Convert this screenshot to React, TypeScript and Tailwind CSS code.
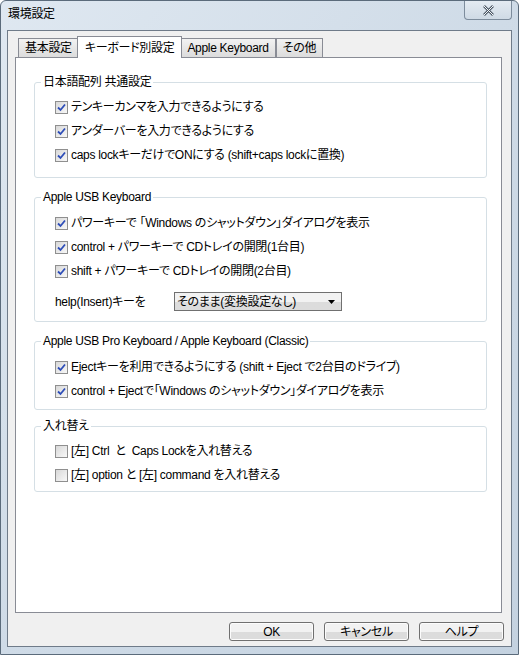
import React from "react";

const FONT = {
  fontFamily: '"Liberation Sans", "Noto Sans CJK JP", sans-serif',
  fontFeatureSettings: '"palt"',
  letterSpacing: "-0.3px",
};

function CheckBox({ checked }: { checked: boolean }) {
  return (
    <span className="flex h-[13px] w-[13px] shrink-0 items-center justify-center border border-[#8f8f8f] bg-white">
      <span className="flex h-[11px] w-[11px] items-center justify-center bg-gradient-to-br from-[#d8d8d8] to-[#f8f8f8]">
        {checked && (
          <svg width="9" height="9" viewBox="0 0 9 9">
            <path d="M1 4.5 L3.5 7 L8 1.5" fill="none" stroke="#2d4db8" strokeWidth="1.8" />
          </svg>
        )}
      </span>
    </span>
  );
}

function Row({ checked, children }: { checked: boolean; children: React.ReactNode }) {
  return (
    <div className="flex h-[24px] items-center gap-[3px] pl-[20px] text-[12px] text-black">
      <CheckBox checked={checked} />
      <span className="whitespace-pre leading-[14px]">{children}</span>
    </div>
  );
}

function Group({
  title,
  className,
  children,
}: {
  title: string;
  className?: string;
  children: React.ReactNode;
}) {
  return (
    <fieldset className={"ml-[18px] mr-[14px] rounded-[3px] border border-[#d5dfe5] " + (className ?? "")}>
      <legend className="ml-[6px] px-[2px] text-[12px] leading-[14px] text-black">{title}</legend>
      {children}
    </fieldset>
  );
}

function Tab({ label, active }: { label: string; active?: boolean }) {
  if (active) {
    return (
      <div className="relative z-10 -mb-px -ml-[2px] -mr-[2px] flex h-[22px] items-center border border-b-0 border-[#898c95] bg-white px-[7px] text-[12px]">
        {label}
      </div>
    );
  }
  return (
    <div className="flex h-[19px] items-center border border-b-0 border-[#898c95] bg-gradient-to-b from-[#f2f2f2] to-[#dcdcdc] px-[6px] text-[12px]">
      {label}
    </div>
  );
}

function Button({ label }: { label: string }) {
  return (
    <button className="flex h-[19px] w-[85px] items-center justify-center rounded-[3px] border border-[#707070] bg-gradient-to-b from-[#f2f2f2] from-50% to-[#dcdcdc] to-50% text-[12px] text-black shadow-[inset_0_0_0_1px_#fcfcfc]">
      {label}
    </button>
  );
}

export default function App() {
  return (
    <div style={FONT} className="h-[655px] w-[519px] bg-white">
      <div className="flex h-[655px] w-[519px] flex-col rounded-t-[6px] border border-[#5b6b7b] bg-gradient-to-br from-[#dfe8f1] via-[#cfdbe7] to-[#c4d2e0]">
        <div className="flex h-[29px] items-start justify-between">
          <span className="pl-[7px] pt-[6px] text-[12px] leading-[14px] text-black">環境設定</span>
          <div className="mr-[6px] flex h-[19px] w-[48px] items-center justify-center rounded-b-[4px] border border-t-0 border-[#7d8c9c] bg-gradient-to-b from-[#e4ebf2] to-[#cfdae5]">
            <svg width="13" height="11" viewBox="0 0 13 11">
              <path d="M2 1 L11 10 M11 1 L2 10" stroke="#4c5866" strokeWidth="2.6" />
              <path d="M2 1 L11 10 M11 1 L2 10" stroke="#f4f6f8" strokeWidth="1" />
            </svg>
          </div>
        </div>
        <div className="mx-[6px] mb-[7px] flex flex-1 flex-col border border-[#6f7b89] bg-[#f0f0f0]">
          <div className="flex items-end pl-[10px] pt-[5px]">
            <Tab label="基本設定" />
            <Tab label="キーボード別設定" active />
            <Tab label="Apple Keyboard" />
            <Tab label="その他" />
          </div>
          <div className="ml-[7px] mr-[9px] flex h-[556px] flex-col border border-[#898c95] bg-white pt-[17px]">
            <Group title="日本語配列 共通設定" className="pb-[10px] pt-[6px]">
              <Row checked>テンキーカンマを入力できるようにする</Row>
              <Row checked>アンダーバーを入力できるようにする</Row>
              <Row checked>caps lockキーだけでONにする (shift+caps lockに置換)</Row>
            </Group>
            <Group title="Apple USB Keyboard" className="mt-[12px] pb-[10px] pt-[7px]">
              <Row checked>パワーキーで 「Windows のシャットダウン」ダイアログを表示</Row>
              <Row checked>control + パワーキーで CDトレイの開閉(1台目)</Row>
              <Row checked>shift + パワーキーで CDトレイの開閉(2台目)</Row>
              <div className="mt-[9px] flex h-[19px] items-center pl-[20px] text-[12px]">
                <span className="w-[119px]">help(Insert)キーを</span>
                <div className="flex h-[19px] w-[168px] items-center justify-between border border-[#707070] bg-gradient-to-b from-[#f2f2f2] from-50% to-[#dcdcdc] to-50% pl-[2px] pr-[6px]">
                  <span>そのまま(変換設定なし)</span>
                  <svg width="7" height="4" viewBox="0 0 7 4">
                    <path d="M0 0 H7 L3.5 4 Z" fill="#000" />
                  </svg>
                </div>
              </div>
            </Group>
            <Group title="Apple USB Pro Keyboard / Apple Keyboard (Classic)" className="mt-[12px] pb-[6px] pt-[7px]">
              <Row checked>Ejectキーを利用できるようにする (shift + Eject で2台目のドライブ)</Row>
              <Row checked>control + Ejectで「Windows のシャットダウン」ダイアログを表示</Row>
            </Group>
            <Group title="入れ替え" className="mt-[9px] pb-[4px] pt-[6px]">
              <Row checked={false}>[左] Ctrl  と  Caps Lockを入れ替える</Row>
              <Row checked={false}>[左] option と [左] command を入れ替える</Row>
            </Group>
          </div>
          <div className="flex justify-end gap-[10px] pr-[7px] pt-[9px]">
            <Button label="OK" />
            <Button label="キャンセル" />
            <Button label="ヘルプ" />
          </div>
        </div>
      </div>
    </div>
  );
}
